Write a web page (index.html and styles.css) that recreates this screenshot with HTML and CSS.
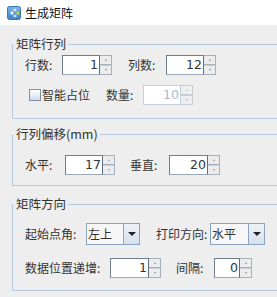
FILE: index.html
```html
<!DOCTYPE html>
<html>
<head>
  <meta charset="utf-8">
  <title>生成矩阵</title>
  <link rel="stylesheet" href="styles.css">
</head>
<body>
  <div class="titlebar">
    <svg class="app-icon" width="14" height="14" viewBox="0 0 14 14">
      <defs>
        <linearGradient id="ig" x1="0" y1="0" x2="0" y2="1">
          <stop offset="0" stop-color="#7fb6ea"/>
          <stop offset="1" stop-color="#3a7fc8"/>
        </linearGradient>
      </defs>
      <rect x="0.5" y="0.5" width="13" height="13" rx="2" fill="url(#ig)" stroke="#3d77b4"/>
      <path d="M3 7 L5 5 L7 7 L5 9 Z" fill="#fff" opacity="0.9"/>
      <path d="M6 4 L8 2.5 L10 4 L8 5.5 Z" fill="#fff" opacity="0.8"/>
      <path d="M6 10 L8 8.5 L10 10 L8 11.5 Z" fill="#fff" opacity="0.8"/>
      <rect x="9.5" y="6" width="2.5" height="2.5" fill="#c8d84a"/>
    </svg>
    <span class="title">生成矩阵</span>
  </div>

  <div class="content">
    <fieldset class="group group-matrix">
      <legend>矩阵行列</legend>
      <div class="row">
        <span class="lbl w37">行数:</span>
        <div class="spin w50">
          <div class="spin-field">1</div>
          <div class="spin-btns"><span class="spin-btn up"></span><span class="spin-btn down"></span></div>
        </div>
        <span class="lbl gap16 w38">列数:</span>
        <div class="spin w50">
          <div class="spin-field">12</div>
          <div class="spin-btns"><span class="spin-btn up"></span><span class="spin-btn down"></span></div>
        </div>
      </div>
      <div class="row row2">
        <span class="check"></span>
        <span class="lbl check-lbl">智能占位</span>
        <span class="lbl w37">数量:</span>
        <div class="spin w50 disabled">
          <div class="spin-field">10</div>
          <div class="spin-btns"><span class="spin-btn up"></span><span class="spin-btn down"></span></div>
        </div>
      </div>
    </fieldset>

    <fieldset class="group group-offset">
      <legend>行列偏移(mm)</legend>
      <div class="row">
        <span class="lbl w40">水平:</span>
        <div class="spin w50">
          <div class="spin-field">17</div>
          <div class="spin-btns"><span class="spin-btn up"></span><span class="spin-btn down"></span></div>
        </div>
        <span class="lbl gap15 w39">垂直:</span>
        <div class="spin w51">
          <div class="spin-field">20</div>
          <div class="spin-btns"><span class="spin-btn up"></span><span class="spin-btn down"></span></div>
        </div>
      </div>
    </fieldset>

    <fieldset class="group group-dir">
      <legend>矩阵方向</legend>
      <div class="row">
        <span class="lbl w61">起始点角:</span>
        <div class="combo w54">
          <div class="combo-text">左上</div>
          <div class="combo-btn"><span class="tri"></span></div>
        </div>
        <span class="lbl gap16 w54">打印方向:</span>
        <div class="combo w55">
          <div class="combo-text">水平</div>
          <div class="combo-btn"><span class="tri"></span></div>
        </div>
      </div>
      <div class="row row-step">
        <span class="lbl w85">数据位置递增:</span>
        <div class="spin w51">
          <div class="spin-field">1</div>
          <div class="spin-btns"><span class="spin-btn up"></span><span class="spin-btn down"></span></div>
        </div>
        <span class="lbl gap15 w38">间隔:</span>
        <div class="spin w38">
          <div class="spin-field">0</div>
          <div class="spin-btns"><span class="spin-btn up"></span><span class="spin-btn down"></span></div>
        </div>
      </div>
    </fieldset>
  </div>
</body>
</html>
```

FILE: styles.css
```css
body {
  margin: 0;
  width: 277px;
  height: 297px;
  overflow: hidden;
  background: #eeeeee;
  font-family: "Noto Sans CJK SC", "Liberation Sans", sans-serif;
  font-size: 12px;
  color: #333;
}
.titlebar {
  height: 25px;
  background: #fff;
  display: flex;
  align-items: center;
  padding-left: 7px;
}
.app-icon {
  display: block;
  margin-right: 4px;
}
.title {
  font-size: 12px;
  color: #111;
  line-height: 16px;
}
.content {
  padding-left: 12px;
}
.group {
  margin: 0;
  border: 1px solid #b7cbe0;
  border-right: none;
  padding: 0 0 0 12px;
  min-width: 0;
}
.group legend {
  padding: 0 2px 0 3px;
  margin-left: -12px;
  font-size: 12.5px;
  line-height: 16px;
  color: #333;
}
.group-matrix {
  margin-top: 11px;
  padding-top: 3px;
  padding-bottom: 13px;
}
.group-offset {
  margin-top: 7px;
  padding-top: 13px;
  padding-bottom: 10px;
}
.group-dir {
  margin-top: 10px;
  padding-top: 11px;
  padding-bottom: 12px;
}
.row {
  display: flex;
  align-items: center;
  height: 20px;
}
.row2 {
  margin-top: 10px;
}
.group-dir .row {
  height: 22px;
}
.group-dir .row-step {
  height: 20px;
  margin-top: 13px;
}
.lbl {
  white-space: nowrap;
  line-height: 16px;
  flex: none;
}
.gap15 { margin-left: 15px; }
.gap16 { margin-left: 16px; }
.w37 { width: 37px; }
.w38 { width: 38px; }
.w39 { width: 39px; }
.w40 { width: 40px; }
.w50 { width: 50px; }
.w51 { width: 51px; }
.w54 { width: 54px; }
.w55 { width: 55px; }
.w61 { width: 61px; }
.w85 { width: 85px; }

.check {
  width: 10px;
  height: 10px;
  margin-left: 4px;
  margin-right: 1px;
  border: 1px solid #7d90a4;
  background: linear-gradient(#ffffff, #cfdced);
  flex: none;
}
.check-lbl {
  width: 64px;
  color: #333;
}

.spin {
  display: flex;
  height: 20px;
  box-sizing: border-box;
  flex: none;
}
.spin-field {
  flex: 1;
  background: #fff;
  border: 1px solid #9aa7b4;
  border-top-color: #6f7f8f;
  border-left-color: #6f7f8f;
  border-right-color: #5f6f80;
  text-align: right;
  padding-right: 1px;
  font-family: "DejaVu Sans", "Liberation Sans", sans-serif;
  font-size: 12.5px;
  line-height: 18px;
  color: #2b3440;
}
.spin-btns {
  width: 12px;
  display: flex;
  flex-direction: column;
}
.spin-btn {
  flex: 1;
  display: flex;
  align-items: center;
  justify-content: center;
  background: #ececec;
  border: 1px solid #a5b0bb;
  border-left: none;
}
.spin-btn.down {
  border-top: 1px solid #c9d0d7;
}
.spin-btn::after {
  content: "";
  width: 0;
  height: 0;
  border-left: 1.5px solid transparent;
  border-right: 1.5px solid transparent;
}
.spin-btn.up::after {
  border-bottom: 2px solid #8a96a3;
}
.spin-btn.down::after {
  border-top: 2px solid #8a96a3;
}
.spin.disabled .spin-field {
  border-color: #c6d0da;
  color: #a8bbce;
}
.spin.disabled .spin-btn {
  border-color: #c6ced6;
  background: #eeeeee;
}
.spin.disabled .spin-btn::after {
  opacity: 0.5;
}

.combo {
  display: flex;
  height: 22px;
  box-sizing: border-box;
  border: 1px solid #8ba5c0;
  background: #f7f7f7;
  flex: none;
}
.combo-text {
  flex: 1;
  padding-left: 1px;
  line-height: 20px;
  color: #333;
}
.combo-btn {
  width: 15px;
  border-left: 1px solid #8ba5c0;
  background: linear-gradient(#eef3f8, #d5e1ee);
  display: flex;
  align-items: center;
  justify-content: center;
}
.tri {
  width: 0;
  height: 0;
  border-left: 4px solid transparent;
  border-right: 4px solid transparent;
  border-top: 4px solid #222;
}
```
